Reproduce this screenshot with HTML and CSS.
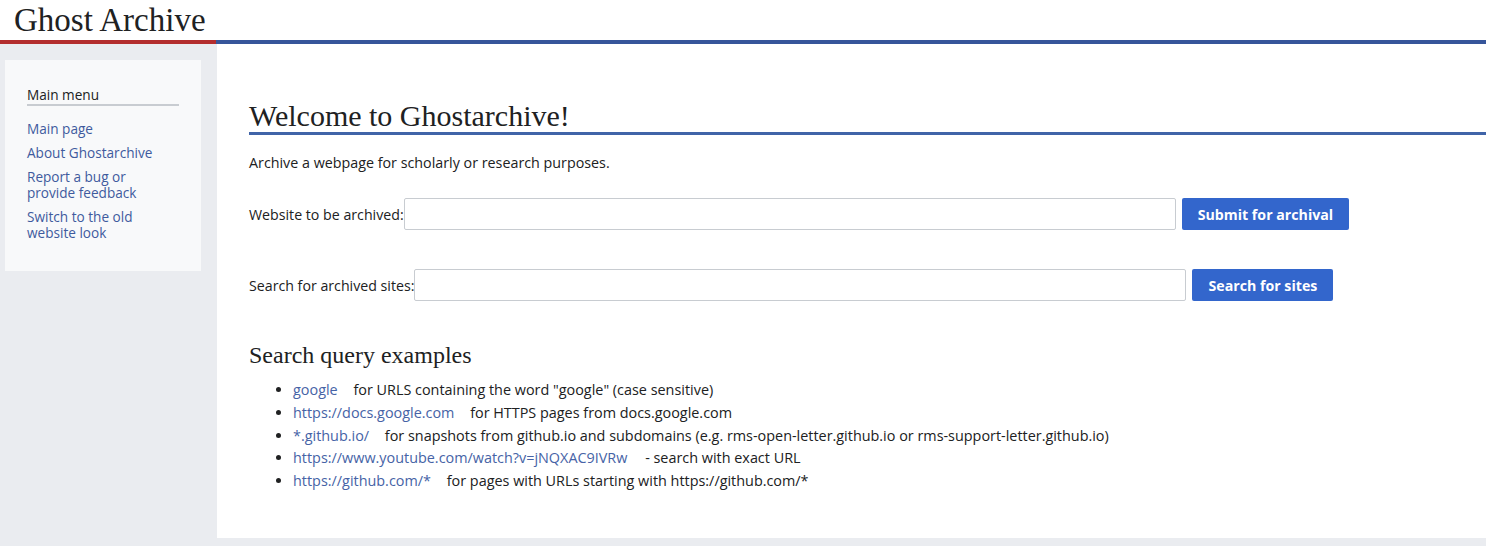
FILE: index.html
```html
<!DOCTYPE html>
<html lang="en">
<head>
    <meta charset="UTF-8">
    <meta name="viewport" content="width=device-width, initial-scale=1.0">
    <title>Ghostarchive</title>
    <link rel="stylesheet" href="styles.css">
</head>
<body>

    <!-- Header -->
    <div class="header">
        <div class="site-title">Ghost Archive</div>
    </div>
    <div class="stripe">
        <div class="stripe-red"></div>
        <div class="stripe-blue"></div>
    </div>

    <div class="page">
        <!-- Sidebar -->
        <div class="sidebar">
            <div class="menu">
                <div class="menu-title">Main menu</div>
                <a href="#" class="menu-item">Main page</a>
                <a href="#" class="menu-item">About Ghostarchive</a>
                <a href="#" class="menu-item">Report a bug or provide feedback</a>
                <a href="#" class="menu-item">Switch to the old website look</a>
            </div>
        </div>

        <!-- Main Content -->
        <div class="main">
            <h1>Welcome to Ghostarchive!</h1>
            <p class="intro">Archive a webpage for scholarly or research purposes.</p>

            <form class="form-row">
                <label>Website to be archived:</label>
                <input type="text">
                <button class="btn" type="button">Submit for archival</button>
            </form>

            <form class="form-row second">
                <label>Search for archived sites:</label>
                <input type="text">
                <button class="btn" type="button">Search for sites</button>
            </form>

            <h2>Search query examples</h2>
            <ul class="examples">
                <li><a href="#">google</a> for URLS containing the word "google" (case sensitive)</li>
                <li><a href="#">https://docs.google.com</a> for HTTPS pages from docs.google.com</li>
                <li><a href="#">*.github.io/</a> for snapshots from github.io and subdomains (e.g. rms-open-letter.github.io or rms-support-letter.github.io)</li>
                <li><a href="#" class="wide">https://www.youtube.com/watch?v=jNQXAC9IVRw</a> - search with exact URL</li>
                <li><a href="#">https://github.com/*</a> for pages with URLs starting with https://github.com/*</li>
            </ul>
        </div>
    </div>

</body>
</html>
```

FILE: styles.css
```css
body {
    font-family: "Open Sans", "Noto Sans", sans-serif;
    margin: 0;
    padding: 0 0 8px 0;
    background-color: #eaecf0;
    color: #202122;
}
.header {
    background-color: #fff;
    height: 40px;
}
.site-title {
    font-family: "Liberation Serif", serif;
    font-size: 33px;
    line-height: 40px;
    padding-left: 14px;
    color: #202122;
}
.stripe {
    display: flex;
    height: 4px;
}
.stripe-red {
    width: 216px;
    background-color: #b32d2e;
}
.stripe-blue {
    flex: 1;
    background-color: #36559a;
}
.page {
    display: flex;
}
.sidebar {
    width: 217px;
    padding: 16px 0 0 5px;
    box-sizing: border-box;
}
.menu {
    width: 196px;
    height: 211px;
    box-sizing: border-box;
    background-color: #f8f9fa;
    padding: 26px 22px 0 22px;
}
.menu-title {
    font-size: 13.6px;
    line-height: 18px;
    padding-bottom: 0;
    border-bottom: 2px solid #c8ccd1;
    margin-bottom: 15px;
}
.menu-item {
    display: block;
    width: 146px;
    font-size: 13.6px;
    line-height: 16px;
    color: #3f5b9e;
    text-decoration: none;
    margin-bottom: 8px;
}
.main {
    flex: 1;
    background-color: #fff;
    padding: 56px 0 40px 32px;
    height: 398px;
}
h1 {
    font-family: "Liberation Serif", serif;
    font-weight: normal;
    font-size: 30px;
    line-height: 32px;
    margin: 0;
    border-bottom: 3px solid #4064a8;
}
.intro {
    font-size: 14.3px;
    line-height: 20px;
    margin: 18px 0 0 0;
}
.form-row {
    display: flex;
    align-items: center;
    margin-top: 25px;
    font-size: 14.2px;
}
.form-row.second {
    margin-top: 39px;
}
.form-row input {
    width: 772px;
    height: 32px;
    box-sizing: border-box;
    border: 1px solid #c8ccd1;
    border-radius: 2px;
    margin: 0 6px 0 0;
    padding: 0 8px;
}
.btn {
    height: 32px;
    padding: 0 16px;
    background-color: #3366cc;
    color: #fff;
    border: none;
    border-radius: 2px;
    font-family: "Open Sans", "Noto Sans", sans-serif;
    font-weight: bold;
    font-size: 14.2px;
    cursor: pointer;
}
h2 {
    font-family: "Liberation Serif", serif;
    font-weight: normal;
    font-size: 24px;
    line-height: 28px;
    margin: 40px 0 0 0;
}
.examples {
    margin: 10px 0 0 0;
    padding-left: 44px;
    font-size: 14.4px;
    line-height: 22.8px;
}
.examples a {
    color: #4663a6;
    text-decoration: none;
    margin-right: 12px;
}
.examples a.wide {
    margin-right: 14px;
}
```
